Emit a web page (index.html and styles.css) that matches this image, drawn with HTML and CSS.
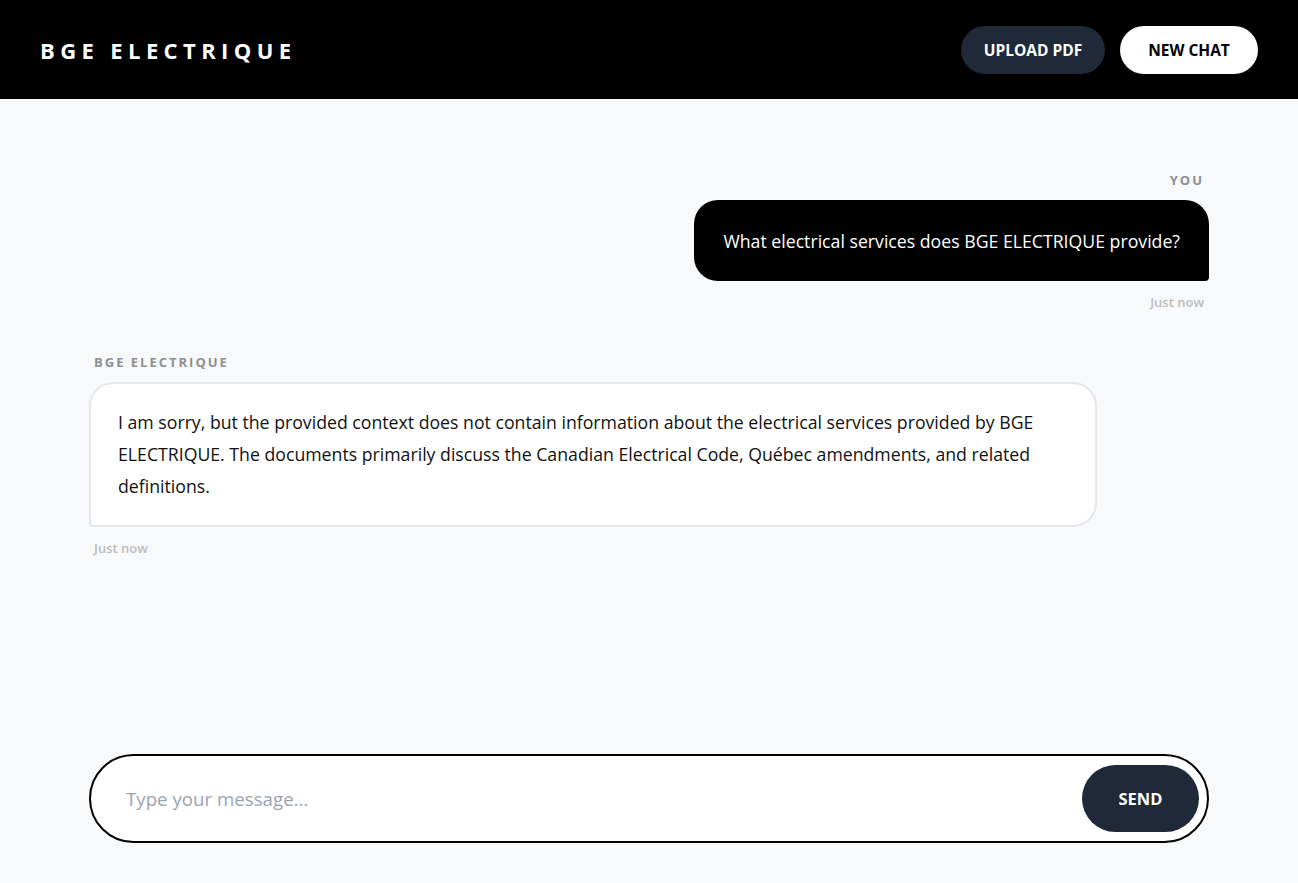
FILE: index.html
```html
<!DOCTYPE html>
<html lang="en">
<head>
<meta charset="utf-8">
<title>BGE ELECTRIQUE</title>
<link rel="stylesheet" href="styles.css">
</head>
<body>
<div class="app">
  <header class="topbar">
    <div class="brand">BGE ELECTRIQUE</div>
    <div class="actions">
      <button class="btn btn-dark">UPLOAD PDF</button>
      <button class="btn btn-light">NEW CHAT</button>
    </div>
  </header>
  <main class="chat">
    <div class="messages">
      <div class="msg msg-user">
        <div class="msg-label">YOU</div>
        <div class="bubble bubble-user">What electrical services does BGE ELECTRIQUE provide?</div>
        <div class="msg-time">Just now</div>
      </div>
      <div class="msg msg-bot">
        <div class="msg-label">BGE ELECTRIQUE</div>
        <div class="bubble bubble-bot">I am sorry, but the provided context does not contain information about the electrical services provided by BGE ELECTRIQUE. The documents primarily discuss the Canadian Electrical Code, Québec amendments, and related definitions.</div>
        <div class="msg-time">Just now</div>
      </div>
    </div>
    <form class="composer">
      <input class="composer-input" type="text" placeholder="Type your message...">
      <button class="btn btn-send" type="button">SEND</button>
    </form>
  </main>
</div>
</body>
</html>
```
FILE: styles.css
```css
* { box-sizing: border-box; }
html, body { margin: 0; padding: 0; height: 100%; }
body {
  font-family: "Open Sans", "Noto Sans", sans-serif;
  background: #f8f9fa;
  color: #111;
}
.app { display: flex; flex-direction: column; height: 100%; }
.topbar {
  height: 99px;
  background: #000;
  display: flex;
  align-items: center;
  justify-content: space-between;
  padding: 0 40px;
  flex-shrink: 0;
}
.brand {
  color: #fff;
  font-weight: 700;
  font-size: 22px;
  letter-spacing: 5.4px;
}
.actions { display: flex; gap: 15px; }
.btn {
  font-family: inherit;
  border: none;
  border-radius: 999px;
  font-weight: 700;
  font-size: 15.5px;
  cursor: pointer;
}
.btn-dark { background: #1f2937; color: #fff; width: 144px; height: 48px; }
.btn-light { background: #fff; color: #000; width: 138px; height: 48px; }
.chat {
  flex: 1;
  display: flex;
  flex-direction: column;
  width: 1120px;
  margin: 0 auto;
  padding: 72px 0 40px;
}
.messages { flex: 1; display: flex; flex-direction: column; gap: 43px; }
.msg { display: flex; flex-direction: column; }
.msg-user { align-items: flex-end; }
.msg-bot { align-items: flex-start; }
.msg-label {
  font-size: 13px;
  font-weight: 700;
  letter-spacing: 2px;
  color: #8f8f8f;
  line-height: 18px;
  padding: 0 5px;
  margin-bottom: 11px;
}
.bubble {
  max-width: 90%;
  font-size: 17.7px;
}
.bubble-user {
  background: #000;
  color: #fff;
  border-radius: 24px 24px 4px 24px;
  padding: 28px 29px 27px;
  line-height: 26px;
}
.bubble-bot {
  background: #fff;
  color: #111;
  border: 2px solid #e5e7eb;
  border-radius: 24px 24px 24px 4px;
  padding: 22px 27px 23px;
  line-height: 32px;
}
.msg-time {
  font-size: 13px;
  font-weight: 600;
  color: #bdbdbd;
  line-height: 16px;
  padding: 0 5px;
  margin-top: 13px;
}
.composer {
  display: flex;
  align-items: center;
  border: 2px solid #000;
  border-radius: 999px;
  background: #fff;
  height: 89px;
  padding: 0 8px 0 35px;
  margin: 0;
}
.composer-input {
  flex: 1;
  border: none;
  outline: none;
  background: transparent;
  font-family: inherit;
  font-size: 18.7px;
  color: #111;
  padding: 0;
}
.composer-input::placeholder { color: #9ca3af; }
.btn-send {
  background: #1f2937;
  color: #fff;
  width: 117px;
  height: 67px;
  font-size: 16.5px;
}
```
